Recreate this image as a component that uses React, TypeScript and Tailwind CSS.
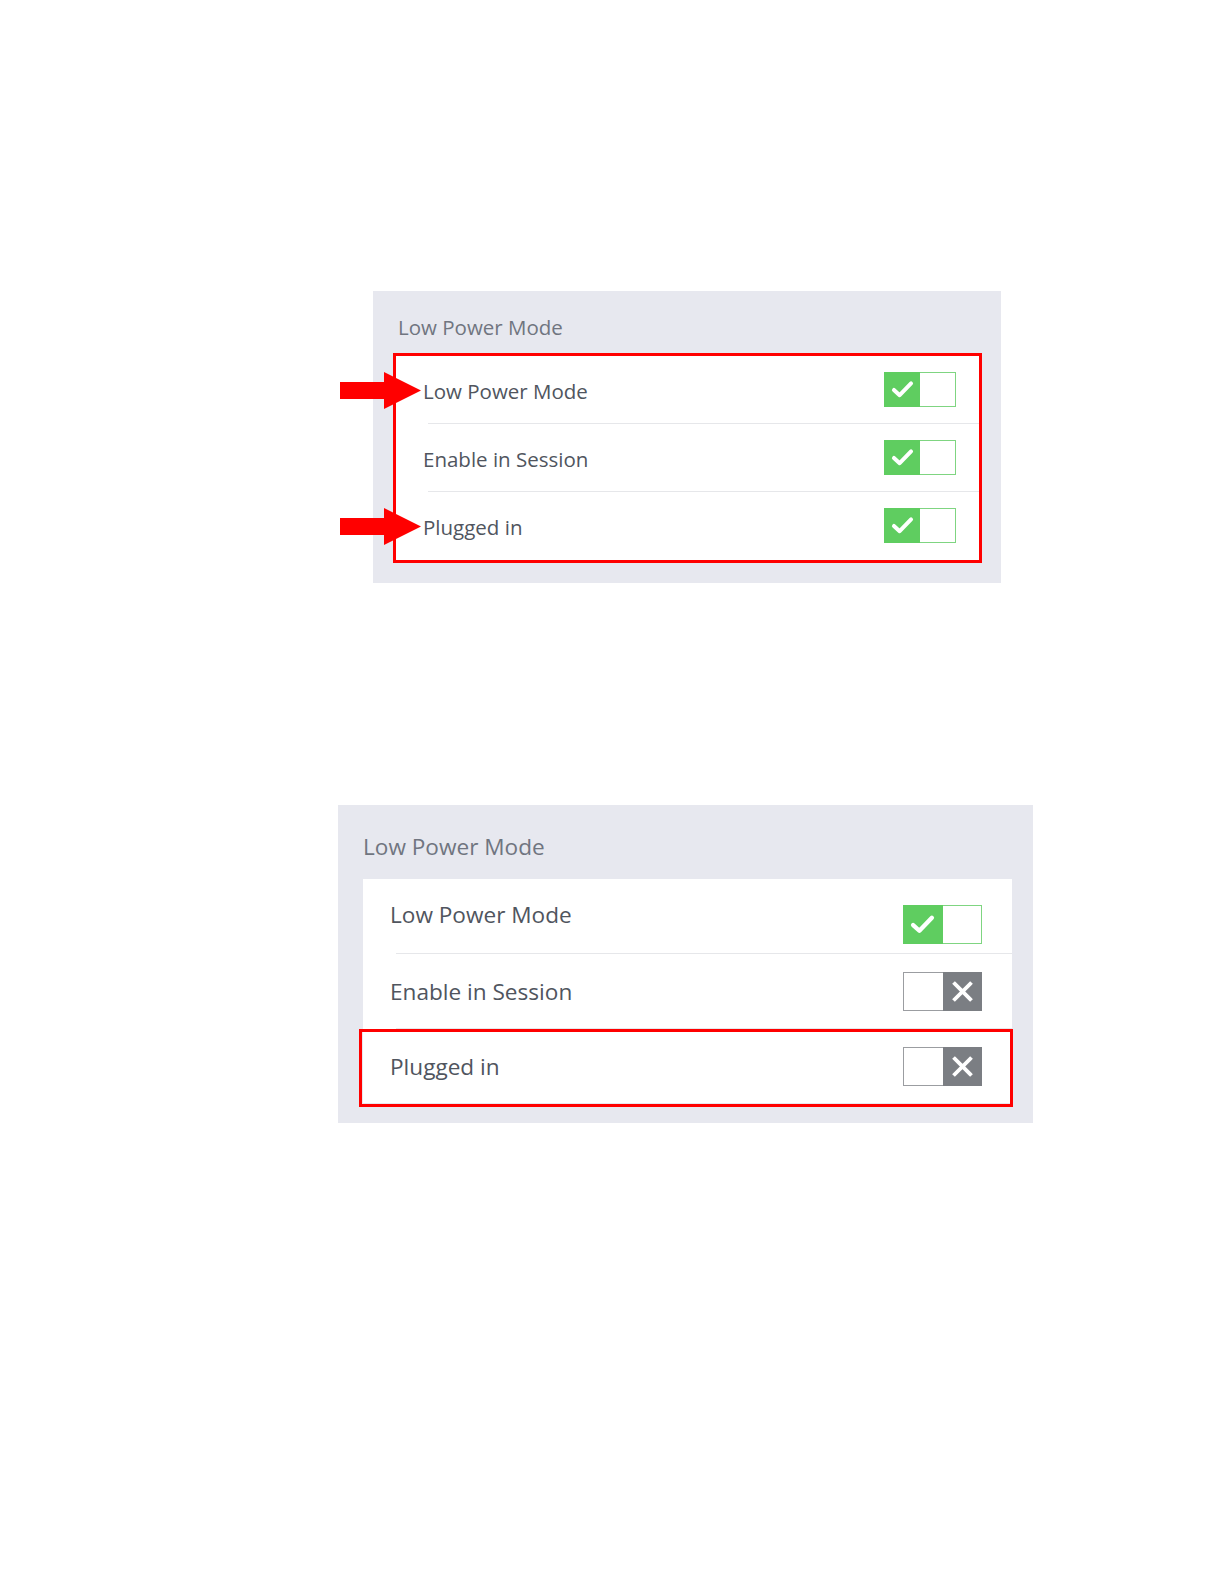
import React from "react";

type Row = { label: string; on: boolean };

const ROWS_TOP: Row[] = [
  { label: "Low Power Mode", on: true },
  { label: "Enable in Session", on: true },
  { label: "Plugged in", on: true },
];

const ROWS_BOTTOM: Row[] = [
  { label: "Low Power Mode", on: true },
  { label: "Enable in Session", on: false },
  { label: "Plugged in", on: false },
];

function Toggle({ on, big }: { on: boolean; big?: boolean }) {
  const size = big ? "h-[39px] w-[79px]" : "h-[35px] w-[72px]";
  if (on) {
    return (
      <div className={`flex shrink-0 ${size}`}>
        <div className="flex w-1/2 items-center justify-center bg-[#5fcd60]">
          <svg viewBox="0 0 24 20" className={big ? "h-[21px] w-[25px]" : "h-[19px] w-[23px]"}>
            <polyline points="3,10.5 9,16 21,3.5" fill="none" stroke="#fff" strokeWidth="4.2" strokeLinecap="round" strokeLinejoin="round" />
          </svg>
        </div>
        <div className="w-1/2 border border-l-0 border-[#7fd581] bg-white" />
      </div>
    );
  }
  return (
    <div className={`flex shrink-0 ${size}`}>
      <div className="w-1/2 border border-r-0 border-[#9b9da1] bg-white" />
      <div className="flex w-1/2 items-center justify-center bg-[#7b7e83]">
        <svg viewBox="0 0 22 22" className="h-[21px] w-[21px]">
          <path d="M3 3 L19 19 M19 3 L3 19" stroke="#fff" strokeWidth="4" strokeLinecap="square" />
        </svg>
      </div>
    </div>
  );
}

function Arrow({ className }: { className: string }) {
  return (
    <svg viewBox="0 0 82 37" className={`absolute h-[37px] w-[82px] ${className}`}>
      <polygon points="0,10 44,10 44,0 81,18.5 44,37 44,27 0,27" fill="#ff0000" />
    </svg>
  );
}

export default function App() {
  return (
    <div className="min-h-[1584px] bg-white pt-[291px] font-['Open_Sans',sans-serif]">
      {/* first panel: whole group outlined */}
      <div className="relative ml-[373px] h-[292px] w-[628px] bg-[#e7e8ef] px-[20px] pt-[22px]">
        <p className="mb-[12px] h-[28px] pl-[5px] text-[20.5px] leading-[28px] text-[#707580]">Low Power Mode</p>
        <div className="h-[210px] w-[589px] border-[3px] border-[#ff0000] bg-white">
          {ROWS_TOP.map((row, i) => (
            <div key={row.label}>
              {i > 0 && <div className="ml-[32px] h-px bg-[#e6e7ea]" />}
              <div className="flex h-[67px] items-center justify-between pl-[27px] pr-[23px]">
                <span className="pt-[4px] text-[20.5px] text-[#50555e]">{row.label}</span>
                <Toggle on={row.on} />
              </div>
            </div>
          ))}
        </div>
        <Arrow className="left-[-33px] top-[81px]" />
        <Arrow className="left-[-33px] top-[217px]" />
      </div>

      {/* second panel: single row outlined */}
      <div className="ml-[338px] mt-[222px] h-[318px] w-[695px] bg-[#e7e8ef] px-[25px] pt-[26px]">
        <p className="mb-[17px] h-[31px] text-[22.6px] leading-[31px] text-[#707580]">Low Power Mode</p>
        <div className="w-[649px] bg-white">
          {ROWS_BOTTOM.map((row, i) => (
            <div key={row.label}>
              {i > 0 && <div className="ml-[33px] h-px bg-[#e6e7ea]" />}
              <div className={`relative flex h-[74px] justify-between pl-[27px] pr-[30px] ${i === 0 ? "items-start" : "items-center"}`}>
                <span className={`text-[22.6px] text-[#50555e] ${i === 0 ? "pt-[19px]" : "pt-[1px]"}`}>{row.label}</span>
                <div className={i === 0 ? "pt-[26px]" : ""}>
                  <Toggle on={row.on} big />
                </div>
                {i === 2 && (
                  <div className="absolute left-[-4px] right-[-1px] top-0 h-[78px] border-[3px] border-[#ff0000]" />
                )}
              </div>
            </div>
          ))}
        </div>
      </div>
    </div>
  );
}
